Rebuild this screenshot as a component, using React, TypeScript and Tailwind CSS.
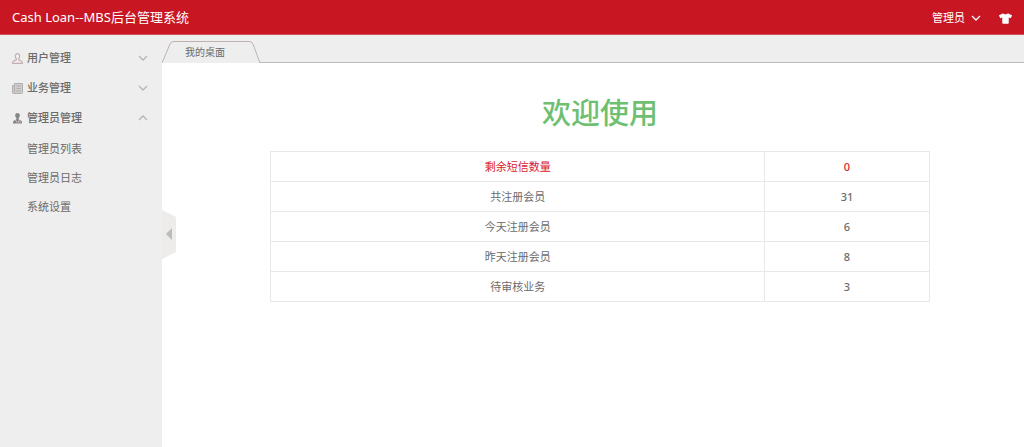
import { useState } from "react";
import { FaTshirt } from "react-icons/fa";

const menus = [
  { title: "用户管理", icon: "user", items: [] },
  { title: "业务管理", icon: "news", items: [] },
  { title: "管理员管理", icon: "admin", items: ["管理员列表", "管理员日志", "系统设置"] },
];

const stats = [
  { label: "剩余短信数量", value: 0, alert: true },
  { label: "共注册会员", value: 31 },
  { label: "今天注册会员", value: 6 },
  { label: "昨天注册会员", value: 8 },
  { label: "待审核业务", value: 3 },
];

const Chevron = ({ up = false }: { up?: boolean }) => (
  <svg viewBox="0 0 10 6" className="h-[6px] w-[10px]" fill="none" stroke="currentColor" strokeWidth="1.3" aria-hidden="true">
    <path d={up ? "M1 5l4-4 4 4" : "M1 1l4 4 4-4"} />
  </svg>
);

const MenuIcon = ({ name }: { name: string }) => {
  if (name === "user") {
    return (
      <svg viewBox="0 0 11 11" className="size-[11px] text-[#c4b0b0]" fill="none" stroke="currentColor" strokeWidth="1.2" aria-hidden="true">
        <path d="M5.5.6C4 .6 3.300 1.600 3.300 3c0 1.200.4 2 1 2.700v1.200L1.300 8.200c-.5.3-.7.800-.7 2.200h9.800c0-1.400-.2-1.900-.7-2.200L6.700 6.900V5.700c.6-.7 1-1.500 1-2.700C7.700 1.600 7 .6 5.500.6z" />
      </svg>
    );
  }
  if (name === "news") {
    return (
      <svg viewBox="0 0 11 11" className="size-[11px] text-[#b3adad]" fill="none" stroke="currentColor" aria-hidden="true">
        <path fill="#cdcdcd" d="M2.5.5h8v9a1 1 0 0 1-1 1h-8a1 1 0 0 1-1-1v-7h2z" />
        <path d="M2.500 2.500v7M4.500 3h4M4.500 5.500h4M4.500 8h4" />
      </svg>
    );
  }
  return (
    <svg viewBox="0 0 11 11" className="size-[11px] text-[#858585]" fill="currentColor" aria-hidden="true">
      <path d="M5.500 0C4 0 3.200 1.100 3.200 2.500c0 1.500 1 2.800 2.300 2.800s2.300-1.300 2.300-2.800C7.800 1.100 7 0 5.500 0z" />
      <path d="M4.300 5h2.400v1.500l2.200.9c.9.400 1.100 1.200 1.100 3.200H1c0-2 .2-2.800 1.100-3.200l2.200-.9z" />
      <path d="M3.600 7.300 5 9.500M7.400 7.300 6 9.500M7.500 9.200h1.200" stroke="#eee" strokeWidth=".7" />
    </svg>
  );
};

const App = () => {
  const [open, setOpen] = useState("管理员管理");
  const [collapsed, setCollapsed] = useState(false);

  return (
    <div className="flex min-h-screen flex-col bg-white font-['Noto_Sans','Noto_Sans_CJK_SC',sans-serif] text-[11px] text-[#6b6b6b]">
      <header className="flex h-[35px] items-center justify-between border-b border-[#d2505a] bg-[#c81623] px-3 pt-[2px] text-white">
        <a href="#home" className="text-[13px]">Cash Loan--MBS后台管理系统</a>
        <div className="flex items-center gap-[18px]">
          <button type="button" className="flex items-center gap-[6px]">
            管理员
            <Chevron />
          </button>
          <button type="button" aria-label="换肤">
            <FaTshirt className="size-[13px]" />
          </button>
        </div>
      </header>

      <div className="flex flex-1">
        {/* Sidebar */}
        {!collapsed && (
          <nav className="w-[162px] shrink-0 bg-[#eee] pt-2">
            {menus.map((menu) => (
              <div key={menu.title}>
                <button
                  type="button"
                  aria-expanded={open === menu.title}
                  onClick={() => setOpen(open === menu.title ? "" : menu.title)}
                  className="flex h-[30px] w-full items-center gap-1 pr-[14px] pl-3 font-medium"
                >
                  <MenuIcon name={menu.icon} />
                  {menu.title}
                  <span className="ml-auto text-[#bfb0b0]">
                    <Chevron up={open === menu.title} />
                  </span>
                </button>
                {open === menu.title && (
                  <ul className="pt-[2px]">
                    {menu.items.map((item) => (
                      <li key={item}>
                        <a href="#page" className="flex h-[29px] items-center pl-[27px]">{item}</a>
                      </li>
                    ))}
                  </ul>
                )}
              </div>
            ))}
          </nav>
        )}

        <div className="flex min-w-0 flex-1 flex-col">
          {/* Tab strip */}
          <div className="flex h-7 shrink-0 items-end border-b border-[#bbb] bg-[#eee]">
            <button type="button" className="relative -mb-px h-[22px] w-[98px] pr-3 text-[10px]">
              <svg viewBox="0 0 98 22" className="absolute inset-0 h-full w-full" aria-hidden="true">
                <path d="M0 22 8 3Q9 .5 12 .5h75q3 0 4 2.500L98 22" fill="#eee" stroke="#c0b0b0" />
              </svg>
              <span className="relative">我的桌面</span>
            </button>
          </div>

          <div className="flex flex-1">
            {/* Sidebar toggle */}
            <div className="w-[14px] shrink-0 pt-[147px]">
              <button type="button" aria-label="收起菜单" onClick={() => setCollapsed(!collapsed)} className="block">
                <svg viewBox="0 0 14 49" className="h-[49px] w-[14px]" aria-hidden="true">
                  <path d="M0 0 14 7v35L0 49z" fill="#eeebeb" />
                  <path d={collapsed ? "M4 18l6 6-6 6z" : "M10 18l-6 6 6 6z"} fill="#b8bcbb" />
                </svg>
              </button>
            </div>

            <main className="flex min-w-0 flex-1 flex-col items-center pt-7">
              <h1 className="text-[29px] leading-[44px] font-medium text-[#6fbf73]">欢迎使用</h1>
              <table className="mt-4 w-7/9 table-fixed border-collapse text-center">
                <tbody>
                  {stats.map((row) => (
                    <tr key={row.label} className={row.alert ? "text-[#d9202f]" : ""}>
                      <th scope="row" className="h-[30px] w-3/4 border border-[#e8e8e8] pt-[2px] font-normal">{row.label}</th>
                      <td className="h-[30px] border border-[#e8e8e8] pt-[2px] font-medium">{row.value}</td>
                    </tr>
                  ))}
                </tbody>
              </table>
            </main>
          </div>
        </div>
      </div>
    </div>
  );
};

export default App;
